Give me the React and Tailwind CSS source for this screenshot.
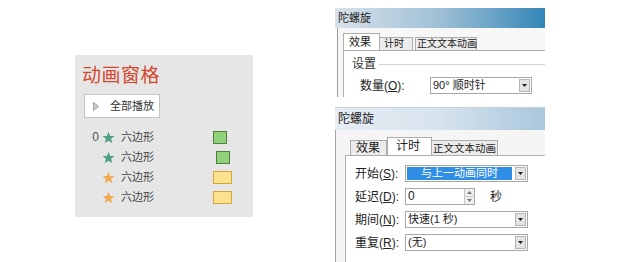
import React from 'react';

const FONT = "font-['Liberation_Sans','Noto_Sans_CJK_SC',sans-serif]";

const ROWS = [
  { num: '0', star: '#4f9f80', box: 'green', offset: 'ml-[52px]' },
  { num: '', star: '#4f9f80', box: 'green', offset: 'ml-[55px]' },
  { num: '', star: '#f2aa52', box: 'yellow', offset: 'ml-[52px]' },
  { num: '', star: '#f2aa52', box: 'yellow', offset: 'ml-[52px]' },
];

function Star({ color }) {
  return (
    <svg width="13" height="13" viewBox="0 0 24 24">
      <polygon
        points="12,1.5 15,9 23,9.3 16.8,14.3 19,22.5 12,17.8 5,22.5 7.2,14.3 1,9.3 9,9"
        fill={color}
      />
    </svg>
  );
}

function DropButton() {
  return (
    <div className="w-[11px] h-[13px] my-auto mr-[1px] bg-[#e4e4e4] border border-[#b5b5b5] flex items-center justify-center">
      <svg width="5" height="3" viewBox="0 0 5 3">
        <polygon points="0,0 5,0 2.5,3" fill="#222" />
      </svg>
    </div>
  );
}

function Combo({ children, width = 'w-[123px]', highlight }) {
  return (
    <div className={`${width} h-[17px] bg-white border border-[#a7a7a7] flex`}>
      {highlight ? (
        <div className="flex-1 m-[1px] mr-[3px] bg-[#2f8ee6] text-white text-[11px] leading-[13px] flex items-center justify-center">
          {children}
        </div>
      ) : (
        <div className="flex-1 pl-[2px] text-[11px] leading-[15px] text-[#222]">{children}</div>
      )}
      <DropButton />
    </div>
  );
}

function Label({ text, k }) {
  return (
    <span className="w-[50px] text-[12px] leading-[16px] text-[#222]">
      {text}(<span className="underline">{k}</span>):
    </span>
  );
}

function AnimationPane() {
  return (
    <div className="ml-[75px] mt-[55px] w-[178px] h-[162px] bg-[#e6e6e6] pl-[9px] pt-[9px] flex flex-col">
      <div className="-ml-[2px] text-[19px] leading-[24px] text-[#d5472c] tracking-[0.5px]">动画窗格</div>
      <div className="mt-[6px] w-[76px] h-[24px] bg-white border border-[#c4c4c4] flex items-center">
        <svg width="6" height="9" viewBox="0 0 6 9" className="ml-[8px]">
          <polygon points="0.5,0.5 5.5,4.5 0.5,8.5" fill="#c9c9c9" stroke="#a3a3a3" strokeWidth="1" />
        </svg>
        <span className="ml-[11px] text-[11px] leading-[14px] text-[#333]">全部播放</span>
      </div>
      <div className="mt-[9px] flex flex-col">
        {ROWS.map((row, i) => (
          <div key={i} className="h-[20px] flex items-center">
            <span className="w-[15px] text-right text-[12px] leading-[14px] text-[#555]">{row.num}</span>
            <span className="ml-[3px] flex"><Star color={row.star} /></span>
            <span className="ml-[6px] w-[40px] text-[11px] leading-[14px] text-[#444]">六边形</span>
            {row.box === 'green' ? (
              <div className={`${row.offset} w-[14px] h-[13px] bg-[#8fd27a] border border-[#4f7f43]`} />
            ) : (
              <div className={`${row.offset} w-[19px] h-[13px] bg-[#fde28e] border border-[#d6a53e]`} />
            )}
          </div>
        ))}
      </div>
    </div>
  );
}

function EffectDialog() {
  return (
    <div className="mt-[8px] h-[89px] overflow-hidden flex flex-col">
      <div className="h-[20px] bg-gradient-to-r from-[#d9e2ea] via-[#9ec0d6] to-[#2f86b7] pl-[3px] text-[11px] leading-[20px] text-[#222]">
        陀螺旋
      </div>
      <div className="flex-1 ml-[2px] border-l border-[#9a9a9a] bg-[#f7f7f7] pl-[5px] pt-[5px] flex flex-col">
        <div className="flex items-end h-[17px] text-[11px] leading-[14px] text-[#222] whitespace-nowrap">
          <div className="w-[37px] h-[17px] bg-white border border-b-0 border-[#adadad] pl-[5px] pt-[1px]">效果</div>
          <div className="w-[33px] h-[13px] bg-[#ececec] border border-l-0 border-b-0 border-[#adadad] pl-[4px] text-[10px] leading-[12px]">计时</div>
          <div className="ml-[2px] w-[62px] h-[13px] bg-[#ececec] border border-b-0 border-[#adadad] pl-[1px] text-[10px] leading-[12px]">正文文本动画</div>
        </div>
        <div className="flex-1 bg-white border-t border-l border-[#adadad] pl-[8px] pt-[5px] flex flex-col">
          <div className="flex items-center h-[16px]">
            <span className="text-[12px] leading-[16px] text-[#333]">设置</span>
            <div className="ml-[3px] flex-1 h-px bg-[#d2d2d2]" />
          </div>
          <div className="mt-[5px] flex items-center">
            <span className="ml-[8px] w-[70px] text-[12px] leading-[16px] text-[#222]">
              数量(<span className="underline">O</span>):
            </span>
            <Combo width="w-[102px]">90° 顺时针</Combo>
          </div>
          <div className="mt-[3px] flex items-center">
            <div className="ml-[80px] w-[8px] h-px bg-[#9a9a9a]" />
            <div className="ml-[37px] w-[46px] h-px bg-[#c4c4c4]" />
          </div>
        </div>
      </div>
    </div>
  );
}

function TimingDialog() {
  return (
    <div className="mt-[10px] flex-1 flex flex-col">
      <div className="h-[23px] bg-gradient-to-r from-[#e6edf3] via-[#d7e3ee] to-[#a9c6dc] border-t border-[#c3cfdb] pl-[3px] text-[12px] leading-[22px] text-[#222]">
        陀螺旋
      </div>
      <div className="flex-1 border-l border-[#a5a5a5] bg-[#f5f5f5] pl-[9px] flex flex-col">
        <div className="h-[25px] pt-[4px] ml-[5px] flex items-end text-[12px] leading-[15px] text-[#222] whitespace-nowrap">
          <div className="w-[37px] h-[15px] bg-[#ececec] border border-b-0 border-[#adadad] pl-[5px]">效果</div>
          <div className="w-[45px] h-[18px] bg-white border border-b-0 border-[#adadad] pl-[8px] pt-[1px]">计时</div>
          <div className="w-[66px] h-[15px] bg-[#ececec] border border-l-0 border-b-0 border-[#adadad] pl-[1px] text-[10.5px]">正文文本动画</div>
        </div>
        <div className="flex-1 bg-white border-t border-l border-[#adadad] pl-[9px] pt-[9px] flex flex-col gap-[6px]">
          <div className="flex items-center">
            <Label text="开始" k="S" />
            <Combo highlight>与上一动画同时</Combo>
          </div>
          <div className="flex items-center">
            <Label text="延迟" k="D" />
            <div className="w-[70px] h-[17px] bg-white border border-[#a7a7a7] flex">
              <span className="flex-1 pl-[2px] text-[12px] leading-[15px] text-[#222]">0</span>
              <div className="w-[10px] flex flex-col border-l border-[#c9c9c9]">
                <div className="flex-1 bg-[#eeeeee] border-b border-[#c9c9c9] flex items-center justify-center">
                  <svg width="5" height="3" viewBox="0 0 5 3"><polygon points="0,3 5,3 2.5,0" fill="#777" /></svg>
                </div>
                <div className="flex-1 bg-[#eeeeee] flex items-center justify-center">
                  <svg width="5" height="3" viewBox="0 0 5 3"><polygon points="0,0 5,0 2.5,3" fill="#777" /></svg>
                </div>
              </div>
            </div>
            <span className="ml-[15px] text-[12px] leading-[16px] text-[#222]">秒</span>
          </div>
          <div className="flex items-center">
            <Label text="期间" k="N" />
            <Combo>快速(1 秒)</Combo>
          </div>
          <div className="flex items-center">
            <Label text="重复" k="R" />
            <Combo>(无)</Combo>
          </div>
        </div>
      </div>
    </div>
  );
}

export default function App() {
  return (
    <div className={`w-[640px] h-[262px] bg-white flex overflow-hidden ${FONT}`}>
      <AnimationPane />
      <div className="ml-[82px] w-[210px] flex flex-col">
        <EffectDialog />
        <TimingDialog />
      </div>
    </div>
  );
}
